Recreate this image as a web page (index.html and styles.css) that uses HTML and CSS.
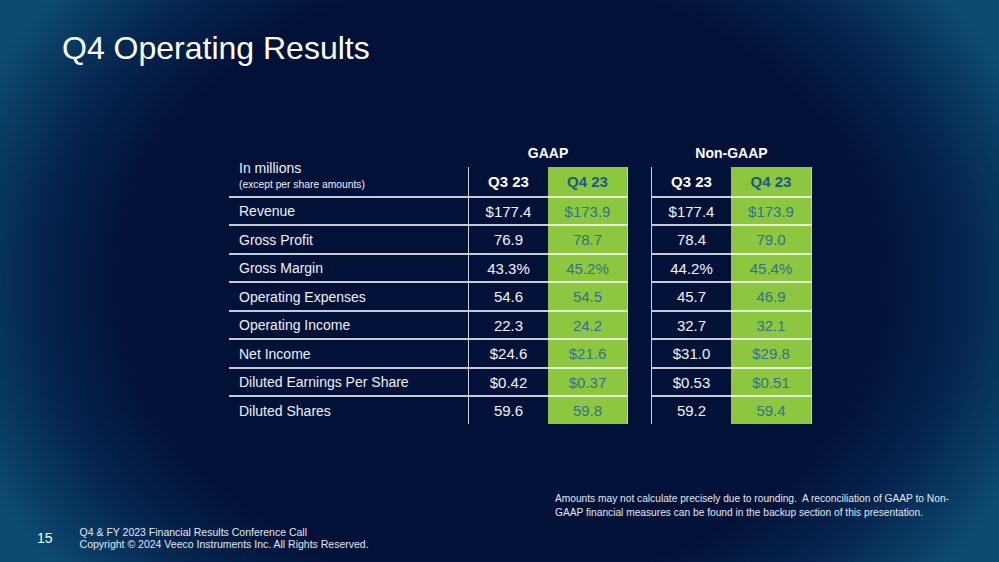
FILE: index.html
```html
<!DOCTYPE html>
<html lang="en">
<head>
<meta charset="utf-8">
<title>Q4 Operating Results</title>
<link rel="stylesheet" href="styles.css">
</head>
<body>
<div class="slide">
  <h1 class="title">Q4 Operating Results</h1>

  <div class="fin">
    <div class="lhead"><span class="lh1">In millions</span><span class="lh2">(except per share amounts)</span></div>
    <div class="group">GAAP</div>
    <div class="gap"></div>
    <div class="group">Non-GAAP</div>

    <div class="hd q3">Q3 23</div>
    <div class="hd q4">Q4 23</div>
    <div class="gap"></div>
    <div class="hd q3">Q3 23</div>
    <div class="hd q4">Q4 23</div>

    <div class="lbl">Revenue</div><div class="v q3">$177.4</div><div class="v q4">$173.9</div><div class="gap"></div><div class="v q3">$177.4</div><div class="v q4">$173.9</div>
    <div class="lbl">Gross Profit</div><div class="v q3">76.9</div><div class="v q4">78.7</div><div class="gap"></div><div class="v q3">78.4</div><div class="v q4">79.0</div>
    <div class="lbl">Gross Margin</div><div class="v q3">43.3%</div><div class="v q4">45.2%</div><div class="gap"></div><div class="v q3">44.2%</div><div class="v q4">45.4%</div>
    <div class="lbl">Operating Expenses</div><div class="v q3">54.6</div><div class="v q4">54.5</div><div class="gap"></div><div class="v q3">45.7</div><div class="v q4">46.9</div>
    <div class="lbl">Operating Income</div><div class="v q3">22.3</div><div class="v q4">24.2</div><div class="gap"></div><div class="v q3">32.7</div><div class="v q4">32.1</div>
    <div class="lbl">Net Income</div><div class="v q3">$24.6</div><div class="v q4">$21.6</div><div class="gap"></div><div class="v q3">$31.0</div><div class="v q4">$29.8</div>
    <div class="lbl">Diluted Earnings Per Share</div><div class="v q3">$0.42</div><div class="v q4">$0.37</div><div class="gap"></div><div class="v q3">$0.53</div><div class="v q4">$0.51</div>
    <div class="lbl">Diluted Shares</div><div class="v q3">59.6</div><div class="v q4">59.8</div><div class="gap"></div><div class="v q3">59.2</div><div class="v q4">59.4</div>
  </div>

  <p class="note">Amounts may not calculate precisely due to rounding.&nbsp; A reconciliation of GAAP to Non-<br>GAAP financial measures can be found in the backup section of this presentation.</p>

  <div class="footer">
    <span class="page">15</span>
    <div class="ftext">
      <div>Q4 &amp; FY 2023 Financial Results Conference Call</div>
      <div>Copyright © 2024 Veeco Instruments Inc. All Rights Reserved.</div>
    </div>
  </div>
</div>
</body>
</html>
```

FILE: styles.css
```css
* { box-sizing: border-box; }

html, body {
  margin: 0;
  padding: 0;
  background: #021137;
}

.slide {
  width: 999px;
  height: 562px;
  overflow: hidden;
  display: flex;
  flex-direction: column;
  font-family: "Liberation Sans", Arial, sans-serif;
  color: #eef1f6;
  background:
    radial-gradient(ellipse 57% 82% at 50% 50%, #021137 0%, #021137 66%, #05264f 82%, #0d4b72 100%);
}

.title {
  margin: 32px 0 0 62px;
  font-size: 32px;
  line-height: 32px;
  font-weight: normal;
  color: #ffffff;
}

.fin {
  margin: 79px 0 0 229px;
  display: grid;
  grid-template-columns: 239px 80px 80px 23px 80px 81px;
  grid-template-rows: 24px 29px repeat(4, 28px 29px);
  width: max-content;
}

.lhead {
  grid-row: span 2;
  display: flex;
  flex-direction: column;
  justify-content: flex-end;
  padding: 0 0 3px 10px;
}
.lh1 { font-size: 14px; line-height: 17px; }
.lh2 { font-size: 10.3px; line-height: 16px; }

.group {
  grid-column: span 2;
  display: flex;
  align-items: center;
  justify-content: center;
  font-size: 14px;
  font-weight: bold;
  color: #ffffff;
  padding-bottom: 4px;
}

.hd {
  display: flex;
  align-items: center;
  justify-content: center;
  font-size: 15px;
  font-weight: bold;
  color: #ffffff;
}

.lbl {
  display: flex;
  align-items: center;
  padding-left: 10px;
  font-size: 14px;
  border-top: 2px solid rgba(255, 255, 255, 0.78);
}

.v {
  display: flex;
  align-items: center;
  justify-content: center;
  font-size: 15px;
  border-top: 2px solid rgba(255, 255, 255, 0.78);
}

.q3 {
  border-left: 1px solid rgba(255, 255, 255, 0.8);
  color: #f2f4f8;
}
.hd.q3 { color: #ffffff; }

.q4 {
  background: #8dc63f;
  color: #317290;
  border-right: 1px solid rgba(255, 255, 255, 0.35);
}
.hd.q4 { color: #1a5a8a; }

.note {
  margin: 68px 0 0 555px;
  font-size: 10.2px;
  line-height: 14px;
  color: #e4e8ef;
}

.footer {
  margin: 6px 0 0 37px;
  display: flex;
  align-items: center;
  gap: 27px;
}
.page {
  font-size: 14px;
  color: #ffffff;
}
.ftext {
  font-size: 10.5px;
  line-height: 12px;
  color: #e4e8ef;
}
```
